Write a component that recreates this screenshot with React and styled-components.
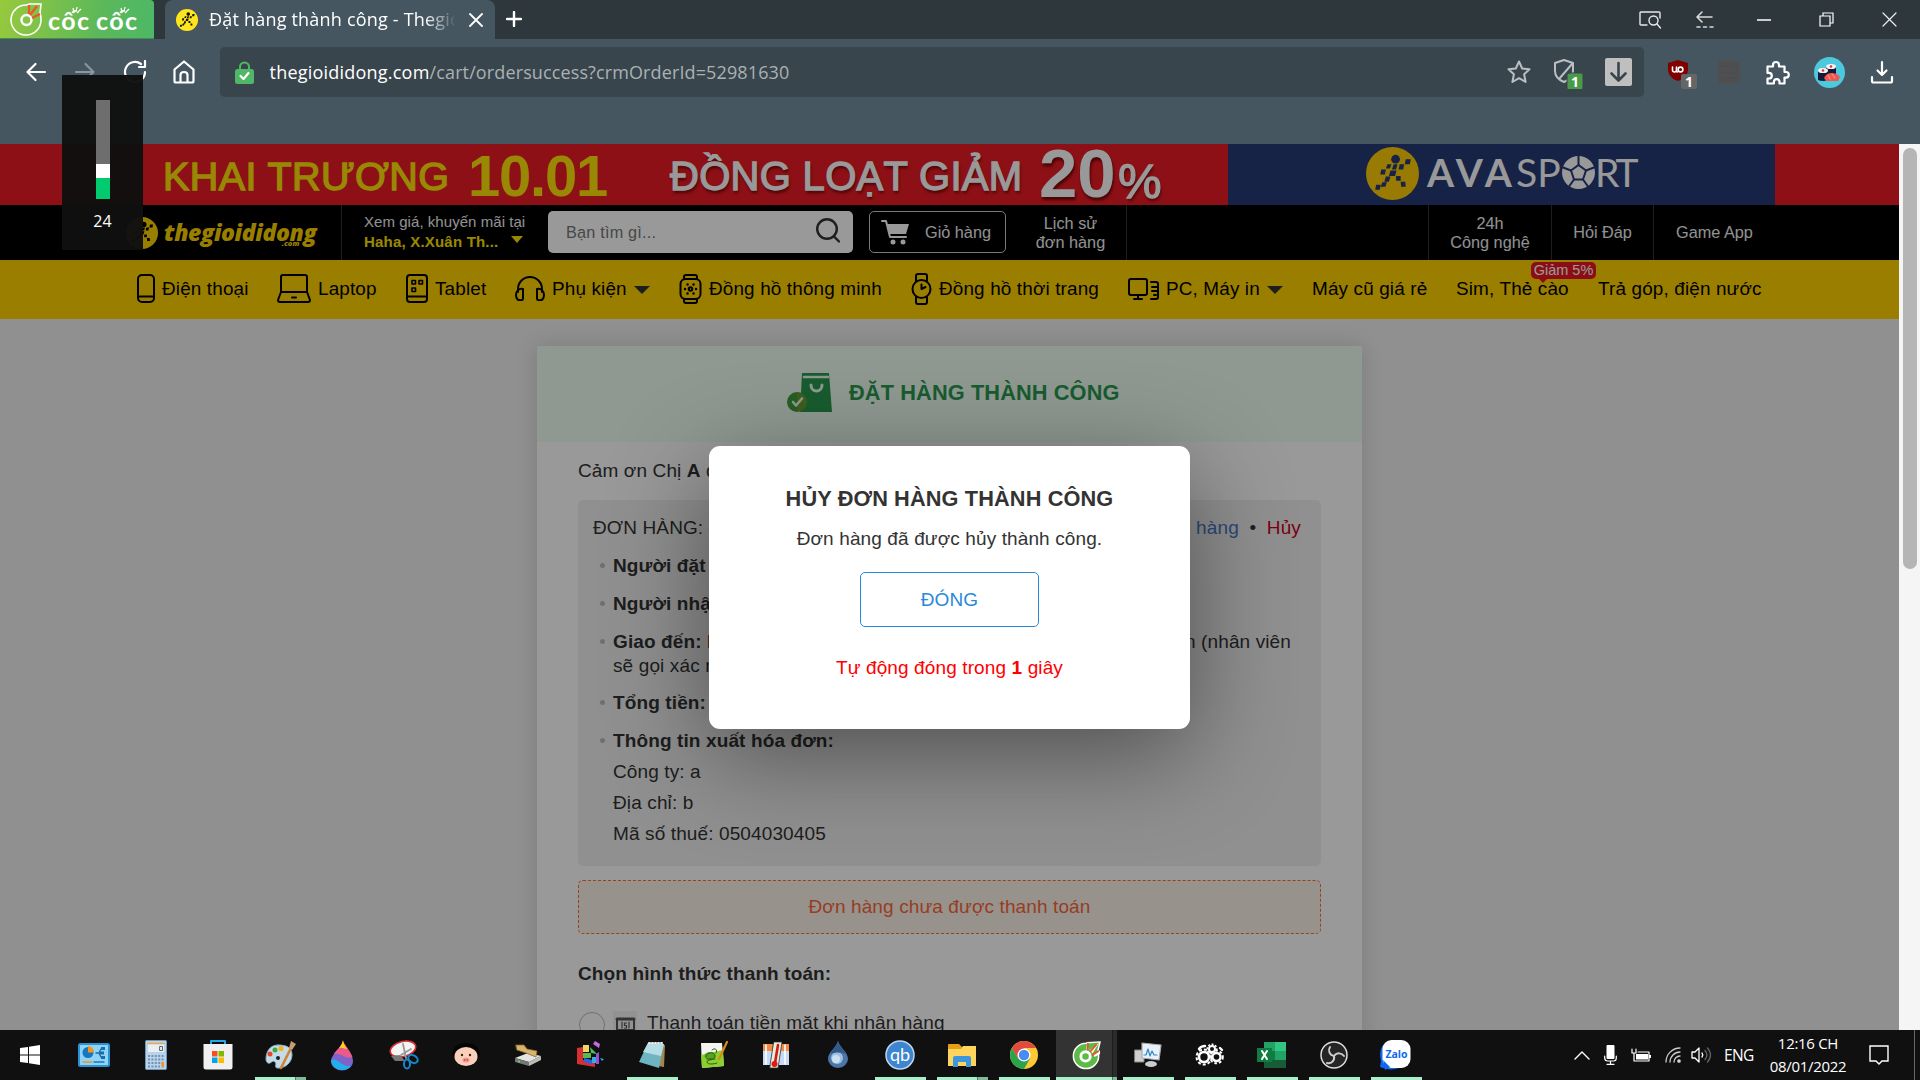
import React from "react";
import styled, { createGlobalStyle } from "styled-components";

const Global = createGlobalStyle`
  * { box-sizing: border-box; }
  body { margin: 0; background: #909090; overflow: hidden; }
  #root { font-family: "Liberation Sans", Arial, sans-serif; }
  svg { display: block; flex-shrink: 0; }
`;

const UI = `"Open Sans", "Noto Sans", sans-serif`;

const Screen = styled.div`
  position: relative;
  width: 1920px;
  height: 1080px;
  overflow: hidden;
  display: flex;
  flex-direction: column;
`;

/* ---------- browser chrome ---------- */
const TabStrip = styled.div`
  height: 39px;
  display: flex;
  background: #2d373c;
`;
const Brand = styled.div`
  width: 154px;
  height: 39px;
  border-top-right-radius: 4px;
  background: linear-gradient(100deg, #97c93d 0%, #5cb85a 65%, #4cb866 100%);
  border-bottom: 1px solid #3f8f50;
`;
const Tab = styled.div`
  width: 330px;
  margin-left: 11px;
  padding-left: 11px;
  display: flex;
  align-items: center;
  background: #455660;
  border-radius: 8px 8px 0 0;
`;
const TabTitle = styled.div`
  width: 245px;
  margin: 0 15px 2px 11px;
  overflow: hidden;
  white-space: nowrap;
  font: 18px/30px ${UI};
  letter-spacing: 0.2px;
  color: #fff;
  mask-image: linear-gradient(90deg, #000 88%, transparent 101%);
`;
const NewTab = styled.div`
  margin: 11px 0 0 11px;
`;
const WindowTools = styled.div`
  margin-left: auto;
  width: 280px;
  display: flex;
  align-items: center;
`;
const Toolbar = styled.div`
  height: 105px;
  display: flex;
  align-items: flex-start;
  background: #455660;
  padding-top: 8px;
`;
const NavButtons = styled.div`
  width: 220px;
  height: 50px;
  padding-left: 24px;
  display: flex;
  align-items: center;
  gap: 25.4px;
`;
const Address = styled.div`
  width: 1424px;
  height: 50px;
  padding: 0 12px 0 15px;
  display: flex;
  align-items: center;
  background: #39454c;
  border-radius: 5px;
`;
const Url = styled.div`
  flex: 1;
  margin: 0 0 1px 15.500px;
  font: 18px/30px ${UI};
  letter-spacing: 0.12px;
  color: #aab1b5;
  white-space: nowrap;
`;
const Host = styled.span`
  color: #fff;
  letter-spacing: 0.22px;
`;
const AddressIcons = styled.div`
  display: flex;
  align-items: center;
  gap: 19px;
`;
const Extensions = styled.div`
  height: 50px;
  padding-left: 19px;
  display: flex;
  align-items: center;
`;
const Slot = styled.div`
  width: ${(p) => p.$w}px;
  display: flex;
  justify-content: center;
  flex-shrink: 0;
`;

/* ---------- page ---------- */
const Viewport = styled.div`
  height: 886px;
  display: flex;
  overflow: hidden;
`;
const Page = styled.div`
  position: relative;
  width: 1899px;
  height: 886px;
  overflow: hidden;
  background: #f0f0f0;
`;
const Scrollbar = styled.div`
  width: 21px;
  background: #f5f5f5;
  padding: 4px 3px 0 4px;
`;
const Thumb = styled.div`
  height: 421px;
  border-radius: 7px;
  background: #b5b5b5;
`;
const Banner = styled.div`
  height: 61px;
  display: flex;
  background: #e91c25;
  overflow: hidden;
`;
const Promo = styled.div`
  width: 1228px;
  padding-left: 163px;
  display: flex;
`;
const PromoText = styled.span`
  width: ${(p) => p.$w}px;
  flex-shrink: 0;
  white-space: nowrap;
  font-size: ${(p) => p.$size}px;
  line-height: ${(p) => p.$lh}px;
  font-weight: ${(p) => (p.$bold ? 700 : 400)};
  letter-spacing: ${(p) => p.$ls || 0}px;
  color: ${(p) => (p.$white ? "#fff" : "#ffe30a")};
  -webkit-text-stroke: ${(p) => (p.$bold ? 0 : 1.3)}px currentColor;
  text-shadow: ${(p) => (p.$white ? "1px 3px 3px rgba(90,0,0,.8)" : "none")};
`;
const Sport = styled.div`
  width: 547px;
  background: #263a75;
  padding: 3px 0 0 138px;
  display: flex;
`;
const SportName = styled.span`
  width: ${(p) => p.$w}px;
  margin-left: ${(p) => p.$ml || 0}px;
  font: ${(p) => p.$weight} 39px/50px Lato, sans-serif;
  letter-spacing: ${(p) => p.$ls}px;
  color: #fff;
  white-space: nowrap;
`;
const Header = styled.div`
  height: 55px;
  display: flex;
  background: #000;
  color: #f2f2f2;
`;
const LogoCell = styled.div`
  width: 342px;
  padding-left: 126px;
  display: flex;
  align-items: center;
  border-right: 1px solid #333;
`;
const Wordmark = styled.div`
  margin: 0 0 1px 6px;
  color: #ffd400;
  font: italic 800 23px/24px "Open Sans", sans-serif;
  letter-spacing: -0.35px;
`;
const DotCom = styled.div`
  height: 4px;
  margin: -3px 17px -1px 0;
  text-align: right;
  font-size: 7.5px;
  line-height: 4px;
  letter-spacing: 0;
`;
const Location = styled.div`
  width: 184px;
  margin-left: 22px;
  padding-top: 7px;
  font-size: 15px;
  line-height: 19.5px;
  letter-spacing: 0.05px;
  white-space: nowrap;
`;
const LocationRow = styled.div`
  display: flex;
  align-items: center;
  gap: 6px;
  font-weight: 700;
  color: #ffe400;
  letter-spacing: 0.2px;
`;
const Search = styled.div`
  width: 305px;
  height: 42px;
  margin-top: 6px;
  padding: 0 13px 0 18px;
  display: flex;
  align-items: center;
  justify-content: space-between;
  border-radius: 5px;
  background: #fff;
  color: #777;
  font-size: 16.25px;
  letter-spacing: 0.2px;
  svg { margin-bottom: 3px; }
`;
const Cart = styled.div`
  width: 137px;
  height: 42px;
  margin: 6px 0 0 16px;
  padding-left: 11px;
  display: flex;
  align-items: center;
  gap: 15px;
  border: 1px solid #ccc;
  border-radius: 5px;
  font-size: 16.25px;
`;
const HeadLink = styled.div`
  width: ${(p) => p.$w}px;
  margin-left: ${(p) => p.$ml || 0}px;
  padding-left: ${(p) => p.$pl || 0}px;
  display: flex;
  align-items: center;
  justify-content: center;
  text-align: center;
  font-size: 16.25px;
  line-height: 19px;
  border-left: ${(p) => (p.$left ? "1px solid #333" : "none")};
  border-right: ${(p) => (p.$right ? "1px solid #333" : "none")};
`;
const Nav = styled.div`
  height: 59px;
  padding: 0 0 2px 137px;
  display: flex;
  background: #ffd200;
`;
const NavItem = styled.div`
  position: relative;
  width: ${(p) => p.$w}px;
  display: flex;
  align-items: center;
  flex-shrink: 0;
  color: #000;
  font-size: 18.9px;
  letter-spacing: 0.15px;
  white-space: nowrap;
`;
const NavIcon = styled.div`
  width: ${(p) => p.$w}px;
  flex-shrink: 0;
`;
const Caret = styled.i`
  margin: 3px 0 0 7px;
  border: 8px solid transparent;
  border-top-color: #333;
  border-width: 8px 8px 0;
`;
const PlaceCaret = styled(Caret)`
  margin-top: -4px;
  border-top-color: #ffe400;
  border-width: 7px 6.5px 0;
`;
const Badge = styled.div`
  position: absolute;
  left: 75px;
  top: 2px;
  width: 65px;
  height: 17px;
  border-radius: 5px;
  background: #e91720;
  color: #fff;
  font-size: 14.5px;
  line-height: 17px;
  letter-spacing: 0;
  text-align: center;
  &::after {
    content: "";
    position: absolute;
    left: 7px;
    top: 16px;
    border: 5px solid transparent;
    border-top-color: #e91720;
    border-bottom: 0;
  }
`;
const Card = styled.div`
  width: 825px;
  height: 800px;
  margin: 27px 0 0 537px;
  background: #fff;
  color: #333;
  font-size: 19px;
  line-height: 24px;
  letter-spacing: 0.12px;
  box-shadow: 0 0 22px rgba(0, 0, 0, 0.14);
`;
const CardHead = styled.div`
  height: 96px;
  padding: 0 0 2px 250px;
  display: flex;
  align-items: center;
  gap: 16px;
  background: #effff3;
  color: #29994f;
  font-size: 21.75px;
  font-weight: 700;
`;
const CardBody = styled.div`
  padding: 17px 41px 0;
`;
const Thanks = styled.div`
  height: 41px;
`;
const Order = styled.div`
  height: 366px;
  padding: 16px 20px 0 15px;
  border-radius: 5px;
  background: #f1f1f1;
  white-space: nowrap;
`;
const OrderHead = styled.div`
  display: flex;
  justify-content: space-between;
  margin-bottom: 14px;
`;
const Actions = styled.div`
  display: flex;
`;
const Blue = styled.span`
  color: #4a78c8;
`;
const Dot = styled.span`
  width: 28px;
  text-align: center;
`;
const Red = styled.span`
  color: ${(p) => p.$c || "#d0021b"};
`;
const Line = styled.div`
  position: relative;
  padding: 0 10px 0 20px;
  margin-bottom: ${(p) => (p.$mb === undefined ? 14 : p.$mb)}px;
  display: flex;
  justify-content: space-between;
  &::before {
    content: "";
    display: ${(p) => (p.$dot ? "block" : "none")};
    position: absolute;
    left: 7px;
    top: 9px;
    width: 5px;
    height: 5px;
    border-radius: 50%;
    background: #bbb;
  }
`;
const Unpaid = styled.div`
  height: 54px;
  margin-top: 14px;
  border: 1px dashed #fb6e2e;
  border-radius: 5px;
  background: #fef4ec;
  color: #f9683a;
  text-align: center;
  line-height: 52px;
`;
const PayTitle = styled.div`
  margin-top: 28px;
  font-weight: 700;
`;
const PayOption = styled.div`
  margin-top: 25px;
  display: flex;
  align-items: flex-start;
`;
const Radio = styled.i`
  width: 26px;
  height: 26px;
  margin: 1px 8px 0 1px;
  border: 1.5px solid #bbb;
  border-radius: 50%;
`;
const PayIcon = styled.div`
  width: 24px;
  height: 26px;
  margin-right: 10px;
  background: #f4f4f4;
`;
const Overlay = styled.div`
  position: absolute;
  inset: 0;
  background: rgba(0, 0, 0, 0.4);
`;
const Modal = styled.div`
  position: absolute;
  left: 709px;
  top: 302px;
  width: 481px;
  height: 283px;
  padding-top: 41px;
  display: flex;
  flex-direction: column;
  align-items: center;
  border-radius: 11px;
  background: #fff;
  box-shadow: 0 25px 100px rgba(0, 0, 0, 0.45);
  color: #333;
  font-size: 19px;
  line-height: 24px;
  letter-spacing: 0.12px;
`;
const ModalTitle = styled.div`
  height: 40px;
  font-size: 21.75px;
  font-weight: 700;
`;
const Close = styled.button`
  width: 179px;
  height: 55px;
  margin: 21px 0 29px;
  padding: 1px 0 0;
  border: 1px solid #288ad6;
  border-radius: 5px;
  background: #fff;
  color: #288ad6;
  font: 19px "Liberation Sans", sans-serif;
  letter-spacing: 0.15px;
`;

/* ---------- volume flyout ---------- */
const Flyout = styled.div`
  position: absolute;
  left: 62px;
  top: 75px;
  width: 81px;
  height: 175px;
  padding-top: 25px;
  display: flex;
  flex-direction: column;
  align-items: center;
  background: rgba(16, 16, 16, 0.97);
  color: #fff;
  font: 16px/20px ${UI};
`;
const Meter = styled.div`
  width: 14px;
  height: 99px;
  margin-bottom: 12px;
  background: linear-gradient(#6e6e6e 64px, #fff 64px 78px, #00cb6e 78px);
`;

/* ---------- taskbar ---------- */
const Taskbar = styled.div`
  position: relative;
  height: 50px;
  display: flex;
  background: #101010;
`;
const Start = styled.div`
  width: 63px;
  display: flex;
  align-items: center;
  padding-left: 20px;
`;
const TaskButton = styled.div`
  position: relative;
  width: 62px;
  height: 50px;
  padding-right: 1px;
  display: flex;
  align-items: center;
  justify-content: center;
  background: ${(p) => (p.$mode === "active" ? "linear-gradient(90deg,#101010 1px,#333 1px 57px,#1c1c1c 57px 58px,#2b2b2b 58px)" : "none")};
  &::after {
    content: "";
    position: absolute;
    bottom: 0;
    left: ${(p) => (p.$mode === "active" ? 1 : 6)}px;
    width: ${(p) => (p.$mode === "active" ? 61 : 51)}px;
    height: 3px;
    background: ${(p) =>
      !p.$mode ? "none"
        : p.$mode === "multi" ? "linear-gradient(90deg,#a6f0ca 40px,#4f7a64 40px 41px,#7fbb9b 41px)"
        : p.$mode === "active" ? "linear-gradient(90deg,#a6f0ca 56px,#4f7a64 56px 57px,#7fbb9b 57px)"
        : "#a6f0ca"};
  }
`;
const Tray = styled.div`
  margin-left: auto;
  display: flex;
  align-items: center;
  color: #fff;
  font: 15.5px/23px ${UI};
`;
const Lang = styled.div`
  width: 55px;
  padding-left: 10px;
  letter-spacing: -0.6px;
`;
const Clock = styled.div`
  width: 80px;
  margin: 0 21px 1px -1px;
  text-align: center;
  font-size: 15px;
  letter-spacing: -0.3px;
  white-space: nowrap;
`;
const ShowDesktop = styled.div`
  width: 6px;
  height: 50px;
  margin-left: 25px;
  border-left: 1px solid #666;
`;

const Ico = ({ w, h, vb, s = "none", sw = 2, f = "none", children }) => (
  <svg width={w} height={h} viewBox={vb || `0 0 ${w} ${h}`} fill={f} stroke={s} strokeWidth={sw} strokeLinecap="round" strokeLinejoin="round">
    {children}
  </svg>
);

const Runner = ({ size, bg, ink }) => (
  <Ico w={size} h={size} vb="0 0 52 52">
    <circle cx="26" cy="26" r="26" fill={bg} />
    <g fill={ink}>
      <circle cx="29" cy="12" r="4.3" />
      <path d="M38 13h5l-1 5h-5zM32 18h4.500l-1 5h-4.500zM26 18h4l-1.500 5h-4zM20 18h4l-1.500 4h-4zM14 23h4.500l-1 5h-4.500zM23 24h6l-1.500 5.500h-6zM18.500 30h4.500l-1.500 5h-4.500zM28.500 29.500h4.500l0 4.500h-4.500zM15 35.500h4.500l-1.500 4.500h-4.500zM33 35h4.500l.5 5h-4.500zM9 38h4.500l-1 5h-4.500z" transform="translate(1 -1)" />
    </g>
  </Ico>
);

const CocMark = ({ size, fill, ring }) => (
  <Ico w={size} h={size} vb="0 0 32 32">
    <path d="M16 3.500A13.500 13.500 0 1 0 29.500 17c0-2-.2-3.500-1-5L31 2 17 3z" fill={fill} stroke="#fff" strokeWidth={ring} />
    <circle cx="15.500" cy="17.500" r="5" stroke="#fff" strokeWidth="3" fill="none" />
    <path d="m17 3-.5 7 3 .5zM30 3l-10 8 3 3zM31 11l-7 4 1 3 6-3z" fill="#fff" />
    <path d="m18 4 0 6M27 5l-6 7M29 12l-6 4" stroke="#f0532d" strokeWidth="2" />
  </Ico>
);

const BrandLogo = () => (
  <svg width="154" height="38" viewBox="0 0 154 38">
    <g transform="translate(10 2)" fill="none" stroke="#fff">
      <path d="M17 3A15 15 0 1 0 31 18c0-3 0-5-1-7l1-9-12 0z" strokeWidth="1.600" />
      <circle cx="16.500" cy="18" r="5" strokeWidth="2.400" />
      <path d="m19 3 0 9M27 4l-7 9M30 12l-8 4" stroke="#f0532d" strokeWidth="2.200" />
    </g>
    <g fill="#fff" fontFamily="Lato, sans-serif" fontWeight="700" fontSize="25">
      <text x="48" y="30" textLength="41">cốc</text>
      <text x="96" y="30" textLength="41">cốc</text>
    </g>
    <path d="m73 8 1 4m3-5-1 5m5-3-4 4M121 8l1 4m3-5-1 5m5-3-4 4" stroke="#fff" strokeWidth="1.200" />
  </svg>
);

const taskIcons = [
  [<Ico w={32} h={24}><rect x="1" y="1" width="30" height="22" rx="1.500" fill="#8fd3f6" stroke="#2a93d4" /><circle cx="10" cy="9.500" r="5.500" fill="#1a76bf" /><path d="M10 9.500V3a6.500 6.500 0 0 1 6 6.500z" fill="#f6921e" /><path d="M18 10h3l2-4M21 10l2 4" stroke="#1a6cb0" strokeWidth="1.400" /><path d="M23 4h4v3h-4zM22 8.500h4v3h-4zM23 13h4v3h-4z" fill="#1a6cb0" /><path d="M5 19h9" stroke="#f6921e" strokeWidth="1.300" /><path d="M16 19h10" stroke="#1a76bf" strokeWidth="1.300" /></Ico>],
  [<Ico w={22} h={30}><rect x=".5" y=".5" width="21" height="29" rx="1" fill="#b9d3e8" stroke="#6f98b8" strokeWidth="1" /><rect x="3" y="3" width="16" height="9" fill="#e9eef0" /><path d="M3 3.500h16" stroke="#f0a348" strokeWidth="1.500" /><rect x="15" y="6.500" width="2.500" height="4" stroke="#345" strokeWidth=".8" /><path d="M3 16h16M3 19.500h16M3 23h16M3 26.500h12" stroke="#6f93b4" strokeWidth="2.200" strokeDasharray="2 1.400" strokeLinecap="butt" /><rect x="16.500" y="22" width="2.500" height="5.500" fill="#f09030" /></Ico>],
  [<Ico w={30} h={30}><path d="M8 5V1h14v4" stroke="#27a8e6" strokeWidth="2" /><path d="M.5 4h29v23a2.500 2.500 0 0 1-2.500 2.500H3A2.500 2.500 0 0 1 .5 27z" fill="#f0f0f0" /><path d="M9 11h5.500v5.500H9z" fill="#f25022" /><path d="M15.500 11H21v5.500h-5.500z" fill="#7fba00" /><path d="M9 17.500h5.500V23H9z" fill="#00a4ef" /><path d="M15.500 17.500H21V23h-5.500z" fill="#ffb900" /></Ico>],
  [<Ico w={32} h={30}><path d="M14 5C5 5 2 13 2 19c0 3 2 5 4 4s3-3 5-1-1 5 2 6c7 1 15-5 15-13S22 5 14 5z" fill="#c3dcea" stroke="#87aec6" strokeWidth="1" /><circle cx="6" cy="14" r="2.500" fill="#e8452c" /><circle cx="11" cy="10" r="2.500" fill="#3faa3c" /><circle cx="17" cy="8.500" r="2.600" fill="#f6b317" /><circle cx="14" cy="18" r="2" fill="#222" /><path d="M17 28 27 8" stroke="#d58130" strokeWidth="2.600" /><path d="m25 8 2-7 5 3-4 6z" fill="#c4a070" /></Ico>, "multi"],
  [<Ico w={24} h={31}><path d="M13 1c-1 7-12 13-12 20a11 9.500 0 0 0 22 0C23 13 15 9 13 1z" fill="#7e63c9" /><path d="M13 1c1 3 7 9 9.500 16-8 3-10-5-19-3C7 10 12 5 13 1z" fill="#ea5b8a" /><path d="M13 0c-1 4-2 6-4 8 4-1 6 1 8 1-2-3-4-6-4-9z" fill="#ffd21d" /><path d="M1 20c7-3 9 7 20 6-4 6-19 6-20-6z" fill="#1fb1ee" /></Ico>],
  [<Ico w={30} h={30}><ellipse cx="14" cy="9" rx="13" ry="7.500" fill="#f4f4f4" stroke="#d72d35" strokeWidth="1.600" transform="rotate(-14 14 9)" /><path d="m2 16 9-1 5 6-10 0z" fill="#777" /><path d="m14 4 3 14M22 9l-10 6" stroke="#999" strokeWidth="1.800" /><ellipse cx="18" cy="24" rx="3" ry="4.500" stroke="#1687d0" strokeWidth="2" /><ellipse cx="24" cy="19" rx="5" ry="3.500" stroke="#1687d0" strokeWidth="2" transform="rotate(30 24 19)" /></Ico>],
  [<Ico w={30} h={24}><path d="M2 14C-1 5 7 0 15 0s16 5 13 14z" fill="#050505" /><ellipse cx="15" cy="13.500" rx="11.500" ry="9.500" fill="#fbd0bb" /><circle cx="11" cy="12" r="1.200" fill="#321" /><circle cx="19" cy="12" r="1.200" fill="#321" /><ellipse cx="15" cy="17" rx="3.600" ry="2.600" fill="#f29a94" /><circle cx="13.700" cy="17" r=".8" fill="#b33" /><circle cx="16.300" cy="17" r=".8" fill="#b33" /></Ico>],
  [<Ico w={30} h={24}><path d="m2 15 13-5 13 3-12 6z" fill="#e4e4e4" /><path d="m2 15 14 4v4L2 19z" fill="#777" /><path d="m16 19 12-6v4l-12 6z" fill="#bbb" /><circle cx="6" cy="18.500" r="1" fill="#4f4" /><path d="m3 2 8 0 3 4 10 2-1 6-10-4-9-3z" fill="#d8b36c" stroke="#8c6a2c" strokeWidth=".8" /></Ico>],
  [<Ico w={30} h={28}><path d="M2 7l6-1v13l12 3v4L2 23z" fill="#d62f2f" /><path d="M8 4h6v7H8z" fill="#f3d469" /><path d="m15 6 7 7-6-1z" fill="#45c35b" /><path d="m18 3 6 4 1-4-5-3z" fill="#c36be0" /><path d="M8 12h8v5H8z" fill="#5dbb45" /><path d="m9 17 8 2v4l-8-2z" fill="#2465e8" /><path d="M17 16h6v6h-6z" fill="#36a9ea" /><path d="m21 13 3-2v12h-3" fill="#9351d6" /><path d="m25 17 4 1-2 2z" fill="#28a8e8" /></Ico>],
  [<Ico w={28} h={28}><path d="m10 3 17 1-1 22-6-1z" fill="#a5854e" /><path d="m10 2 16 1-5 24L1 21z" fill="#6fb4c2" /><path d="m10 2 16 1-3 12L5 11z" fill="#b5dde3" /><path d="M11 2h15" stroke="#eee" strokeWidth="2" strokeDasharray="1 2" /></Ico>, "run"],
  [<Ico w={28} h={28}><path d="m1 2 21 0 2 23-22 2z" fill="#f5f5f0" /><path d="m1 14 22-5 1 16-22 2z" fill="#8bd02c" /><ellipse cx="10" cy="15" rx="5.500" ry="4" fill="#55a522" /><path d="M6 16c0-5 9-6 9-1s-8 3-8 6 8 2 10 1M7 18h8M12 9c3-3 6 0 4 3" stroke="#315c18" strokeWidth="1" /><path d="m19 18 8-17" stroke="#d88a1a" strokeWidth="2.200" /></Ico>],
  [<Ico w={26} h={28}><rect x="0" y="3" width="26" height="21" fill="#c5daf8" /><path d="M0 3h26v7H0z" fill="#f08a45" /><path d="M3 4v19M22 4v19" stroke="#fff" strokeWidth="1.600" /><path d="m11 1 8 0-4 26-8 0z" fill="#e8f0d8" stroke="#333" strokeWidth=".8" /><path d="m15 4-3 18" stroke="#d31919" strokeWidth="2.600" /><circle cx="11.500" cy="23" r="3" fill="#e01818" /></Ico>],
  [<Ico w={22} h={28}><path d="M11 0C9 7 1 11 1 18a10 9 0 0 0 20 0C21 11 13 7 11 0z" fill="#4d75a8" /><circle cx="10" cy="17" r="6" fill="#9dc0e2" /><circle cx="9" cy="18" r="4" fill="#cbe0f2" /><path d="M11 0C9 7 5 9 3 13c5-2 12-2 16 0-2-4-7-7-8-13z" fill="#33588c" /></Ico>],
  [<Ico w={30} h={30}><circle cx="15" cy="15" r="14" fill="#3d85cf" stroke="#bcd6ef" strokeWidth="1.500" /><text x="15" y="20.500" textAnchor="middle" fontFamily="Lato" fontSize="18" fill="#fff">qb</text></Ico>, "run"],
  [<Ico w={28} h={24}><path d="M0 2a1 1 0 0 1 1-1h10l3 3h13v19H0z" fill="#e5a014" /><path d="M0 6h13l2-3h13v20H0z" fill="#ffd45e" /><path d="M5 24V15q0-2 2-2h14q2 0 2 2v9h-5v-5h-8v5z" fill="#3b96dd" /></Ico>, "multi"],
  [<Ico w={28} h={28}><circle cx="14" cy="14" r="14" fill="#fcc934" /><path d="M1.900 7A14 14 0 0 1 26.100 7H14L8 17.500z" fill="#e04a3f" /><path d="M1.900 7A14 14 0 0 0 14 28l6-10.500H8z" fill="#2ba24c" /><circle cx="14" cy="14" r="6.500" fill="#fff" /><circle cx="14" cy="14" r="5.200" fill="#4a8af4" /></Ico>, "run"],
  [<CocMark size={30} fill="#5cbb46" ring={1.6} />, "active"],
  [<Ico w={28} h={26}><path d="M1 8h9v12H1z" fill="#cfcfcf" stroke="#888" strokeWidth="1" /><path d="m8 1 19 2-2 15-17-2z" fill="#e9f2fa" stroke="#aaa" strokeWidth="1.200" /><path d="M10 13h2l2-6 2 7 2-5 2 4h3" stroke="#3486c4" strokeWidth="1.200" /><ellipse cx="17" cy="22" rx="6" ry="3" fill="#ccc" /></Ico>, "run"],
  [<Ico w={30} h={24}><g fill="none" stroke="#fff"><circle cx="9" cy="14" r="5" strokeWidth="2.600" /><circle cx="9" cy="14" r="7.500" strokeWidth="2" strokeDasharray="3 2" strokeLinecap="butt" /><circle cx="21.500" cy="14" r="4" strokeWidth="2.400" /><circle cx="21.500" cy="14" r="6.300" strokeWidth="2" strokeDasharray="2.600 2" strokeLinecap="butt" /><circle cx="17" cy="6" r="3" strokeWidth="2" /><circle cx="17" cy="6" r="4.800" strokeWidth="1.500" strokeDasharray="2 1.600" strokeLinecap="butt" /><path d="M4 6q2-3 6-3M25 5l2 2" strokeWidth="2.400" /></g></Ico>, "run"],
  [<Ico w={30} h={28}><path d="M7 1h22v26H7z" fill="#21a366" /><path d="M18 1h11v9H18z" fill="#33c481" /><path d="M7 10h11v9H7z" fill="#107c41" /><path d="M7 19h22v8H7z" fill="#185c37" /><path d="M0 7h15v14H0z" fill="#107c41" /><path d="m5 10 5 8m0-8-5 8" stroke="#fff" strokeWidth="2" /></Ico>, "run"],
  [<Ico w={28} h={28}><circle cx="14" cy="14" r="13" fill="#252525" stroke="#ddd" strokeWidth="1.500" /><path d="M14 15c-5-1-6-6-4-9M14 15c3-4 8-3 10 0M14 15c1 5-3 8-7 7" stroke="#ccc" strokeWidth="2" /></Ico>, "run"],
  [<Ico w={31} h={30}><path d="M4 4C-1 9 0 17 1 21l-1 6c7 3 14 3 19 1z" fill="#0d68f2" /><rect x="2.500" y="0" width="28" height="28" rx="9" fill="#fff" /><path d="M3 20l2 10 5-3z" fill="#0d68f2" /><text x="16.500" y="17.500" textAnchor="middle" fontFamily="Open Sans" fontWeight="700" fontSize="10.500" fill="#0d68f2">Zalo</text></Ico>, "run"],
];

const K = "#000";
const navItems = [
  [140, 25, "Điện thoại", <Ico w={18} h={29} s={K}><rect x="1" y="1" width="16" height="27" rx="4" /><path d="M1 22.500h16" /></Ico>],
  [129, 41, "Laptop", <Ico w={34} h={29} s={K}><path d="M4 18V3q0-2 2-2h22q2 0 2 2v15M4 18h26l3 8q0 2-2 2H3q-2 0-2-2zM15 23.500h4" /></Ico>],
  [109, 29, "Tablet", <Ico w={22} h={29} s={K}><rect x="1" y="1" width="20" height="27" rx="3" /><path d="M1 22.500h20" /><path d="M6 6.500h3.500v3.500H6zM13 6.500h3.500v3.500H13zM6 14h3.500v3.500H6z" strokeWidth="1.600" /></Ico>],
  [164, 37, "Phụ kiện", <Ico w={30} h={25} s={K}><path d="M3 16v-3a12 12 0 0 1 24 0v3" /><path d="M8 13c-4-1-7 2-7 6s2 6 6 5q1 0 1-2zM22 13c4-1 7 2 7 6s-2 6-6 5q-1 0-1-2z" /></Ico>, true],
  [232, 30, "Đồng hồ thông minh", <Ico w={23} h={30} s={K}><rect x="1.500" y="5" width="20" height="20" rx="5" /><path d="M5 5V3q0-2 2-2h9q2 0 2 2v2M5 25v2q0 2 2 2h9q2 0 2-2v-2" /><circle cx="11.500" cy="15" r="1.800" /><path d="M8.500 10.500h.1M14.500 10.500h.1M6 15h.1M17 15h.1M8.500 19.500h.1M14.500 19.500h.1" strokeWidth="2.400" /></Ico>],
  [217, 28, "Đồng hồ thời trang", <Ico w={21} h={32} s={K}><circle cx="10.500" cy="16" r="9" /><path d="M5 8V3q0-2 2-2h7q2 0 2 2v5M5 24v5q0 2 2 2h7q2 0 2-2v-5M10.500 11.500V16l4-2" /></Ico>],
  [184, 38, "PC, Máy in", <Ico w={31} h={22} s={K}><rect x="1" y="1" width="18" height="16" rx="2" /><path d="M10 17v4M6 21h8" /><path d="M23 4h5q2 0 2 2v13q0 2-2 2h-5M24 9h5M24 13h5M26 17h2" /></Ico>, true],
  [144, 0, "Máy cũ giá rẻ"],
  [142, 0, "Sim, Thẻ cào", null, false, "Giảm 5%"],
  [170, 0, "Trả góp, điện nước"],
];

const W = "#fff";
const G = "#b9bfc2";

export default function App() {
  return (
    <Screen>
      <Global />
      <TabStrip>
        <Brand><BrandLogo /></Brand>
        <Tab>
          <Runner size={22} bg="#ffe61c" ink="#111" />
          <TabTitle>Đặt hàng thành công - Thegioididong</TabTitle>
          <Ico w={14} h={14} s={W} sw={1.8}><path d="m1 1 12 12M13 1 1 13" /></Ico>
        </Tab>
        <NewTab><Ico w={16} h={16} s={W} sw={2.4}><path d="M8 1v14M1 8h14" /></Ico></NewTab>
        <WindowTools>
          <Slot $w={20}><Ico w={23} h={18} s="#e8e8e8" sw={1.4}><path d="M8 14H2q-1 0-1-1V2q0-1 1-1h18q1 0 1 1v5" /><circle cx="14.500" cy="9.500" r="4.500" /><path d="m18 13 3.500 4" /></Ico></Slot>
          <Slot $w={89}><Ico w={19} h={17} s="#d8d8d8" sw={1.6}><path d="M17 6H2M7 1 2 6l5 5" /><path d="M2 16h16" strokeDasharray="3 3.500" /></Ico></Slot>
          <Slot $w={30}><Ico w={14} h={2} s={W} sw={1.4}><path d="M0 1h14" /></Ico></Slot>
          <Slot $w={94}><Ico w={15} h={15} s={W} sw={1.2}><path d="M1 4h10v10H1zM4 4V1h10v10h-3" strokeLinejoin="miter" /></Ico></Slot>
          <Slot $w={33}><Ico w={15} h={15} s="#eee" sw={1.2}><path d="m1 1 13 13M14 1 1 14" /></Ico></Slot>
        </WindowTools>
      </TabStrip>

      <Toolbar>
        <NavButtons>
          <Ico w={24} h={24} s={W} sw={2.2}><path d="M21 12H4M11.500 4 3.500 12l8 8" /></Ico>
          <Ico w={24} h={24} s="#8b979d" sw={2.2}><path d="M3 12h17M12.500 4l8 8-8 8" /></Ico>
          <Ico w={24} h={24} s={W} sw={2.2}><path d="M22 12a10 10 0 1 1-4-8M22 1v6h-6" /></Ico>
          <Ico w={24} h={24} s={W} sw={2.2}><path d="M2.500 9.500 12 1.500l9.500 8V21q0 1.500-1.500 1.500H4q-1.500 0-1.500-1.500z" /><path d="M8.500 22v-7q0-3 3.500-3t3.500 3v7" /></Ico>
        </NavButtons>
        <Address>
          <Ico w={19} h={23}><path d="M5 10V6a4.500 4.500 0 0 1 9 0v4" stroke="#4fb765" strokeWidth="2" /><rect x="0" y="8" width="19" height="15" rx="2.500" fill="#4fb765" /><path d="m5.500 15 3 3 5-6" stroke="#fff" strokeWidth="2.200" /></Ico>
          <Url><Host>thegioididong.com</Host>/cart/ordersuccess?crmOrderId=52981630</Url>
          <AddressIcons>
            <Ico w={24} h={24} s={G} sw={2}><path d="m12 1.500 3.200 7 7.300.8-5.400 5 1.500 7.700-6.600-3.800L5.400 22l1.500-7.700-5.400-5 7.300-.8z" /></Ico>
            <Ico w={36} h={34} s={G} sw={2}><path d="M14 5 5 8v8c0 6 4 9 9 11 5-2 9-5 9-11V8zM22 9 9 24" /><rect x="17" y="18" width="16" height="17" rx="2" fill="#4a9a4b" stroke="#39454c" strokeWidth="1" /><text x="25" y="31.500" fontFamily="Open Sans" fontWeight="700" fontSize="14" fill="#fff" stroke="none" textAnchor="middle">1</text></Ico>
            <Ico w={27} h={28}><rect width="27" height="28" rx="2" fill="#bfbfbf" /><path d="M13.500 5v17M6.500 15.500l7 7 7-7" stroke="#39454c" strokeWidth="2.600" /></Ico>
          </AddressIcons>
        </Address>
        <Extensions>
          <Slot $w={38}><Ico w={32} h={34}><path d="M12 5 2 8v6c0 6 4 10 10 12 6-2 10-6 10-12V8z" fill="#800000" /><path d="M6.500 12v3q0 2 2 2t2-2v-3v3q0 2 1 2" stroke="#fff" strokeWidth="1.600" /><circle cx="14.500" cy="14.500" r="2.400" stroke="#fff" strokeWidth="1.600" /><rect x="15" y="19" width="16" height="15" rx="2" fill="#666" /><text x="23" y="32" fontFamily="Open Sans" fontWeight="700" fontSize="14" fill="#fff" textAnchor="middle">1</text></Ico></Slot>
          <Slot $w={55}><Ico w={22} h={22}><rect width="22" height="22" rx="2" fill="#514f4e" /><path d="M3 5h9M15 3h4v4h-4zM4 12h3M10 12h3M16 12h3M4 17h3M10 17h3M16 17h3" stroke="#454f55" strokeWidth="2" /></Ico></Slot>
          <Slot $w={42}><Ico w={25} h={25} s={W} sw={2.2}><path d="M2.500 6.500H8V5a3 3 0 0 1 6 0v1.500h5.500V12H21a2.800 2.800 0 0 1 0 5.600h-1.500V23.500h-5V22a2.800 2.800 0 0 0-5.600 0v1.500H2.500v-5H4a2.800 2.800 0 0 0 0-5.600H2.500z" /></Ico></Slot>
          <Slot $w={62}><Ico w={31} h={31}><circle cx="15.500" cy="15.500" r="15.500" fill="#4cc9dd" /><path d="M12 9h10v11H12z" fill="#141a38" /><ellipse cx="17" cy="9.500" rx="5" ry="2.600" fill="#f4f4f4" /><circle cx="17" cy="9.500" r="1.300" fill="#d33" /><path d="M4 14h10v9q-5 2-10 0z" fill="#141a38" /><ellipse cx="9" cy="13.500" rx="5" ry="2.600" fill="#f4f4f4" /><circle cx="9" cy="13.500" r="1.300" fill="#d33" /><path d="M10 21c3-7 12-6 16-1l-2 4H12z" fill="#f0574d" /><path d="M14 18l2 4M18 17l3 4" stroke="#ff8b80" strokeWidth="1.200" /></Ico></Slot>
          <Slot $w={44}><Ico w={24} h={24} s={W} sw={2.2}><path d="M12 2v13M7.500 10.500 12 15l4.500-4.500M2 17v4q0 1.500 1.500 1.500h17q1.500 0 1.500-1.500v-4" /></Ico></Slot>
        </Extensions>
      </Toolbar>

      <Viewport>
        <Page>
          <Banner>
            <Promo>
              <PromoText $w={305} $size={39.5} $lh={64} $ls={0.4}>KHAI TRƯƠNG</PromoText>
              <PromoText $w={202} $size={58} $lh={64} $ls={-1.2} $bold>10.01</PromoText>
              <PromoText $w={369} $size={40} $lh={64} $ls={0.3} $white>ĐỒNG LOẠT GIẢM</PromoText>
              <PromoText $w={79} $size={69} $lh={60} $white $bold>20</PromoText>
              <PromoText $w={50} $size={49} $lh={75} $white>%</PromoText>
            </Promo>
            <Sport>
              <Runner size={53} bg="#ffcb05" ink="#263a75" />
              <SportName $w={88} $ml={8} $weight={700} $ls={4}>AVA</SportName>
              <SportName $w={46} $ml={1} $weight={400} $ls={0}>SP</SportName>
              <Slot $w={33}><Ico w={33} h={52}><circle cx="16.500" cy="25.500" r="16.500" fill="#fff" /><path d="m16.500 18 7.500 5.500-3 9h-9l-3-9z" fill="#fff" stroke="#263a75" strokeWidth="2" /><path d="M16.500 18v-9M24 23.500l8-3M21 32.500l5 7M12 32.500l-5 7M9 23.500l-8-3" stroke="#263a75" strokeWidth="2" /></Ico></Slot>
              <SportName $w={50} $ml={0} $weight={400} $ls={-3}>RT</SportName>
            </Sport>
          </Banner>
          <Header>
            <LogoCell>
              <Runner size={32} bg="#ffd400" ink="#000" />
              <Wordmark>thegioididong<DotCom>.com</DotCom></Wordmark>
            </LogoCell>
            <Location>
              Xem giá, khuyến mãi tại
              <LocationRow>Haha, X.Xuân Th...<PlaceCaret /></LocationRow>
            </Location>
            <Search>Bạn tìm gì...<Ico w={24} h={26} s="#333" sw={2.4}><circle cx="11" cy="11" r="9.800" /><path d="m18 18.500 5 5" /></Ico></Search>
            <Cart>
              <Ico w={29} h={26}><path d="M1 2h4l4 16h16" stroke="#fff" strokeWidth="2" /><path d="M6 5h22l-3 10H9z" fill="#fff" /><circle cx="12" cy="23" r="2.500" fill="#fff" /><circle cx="22" cy="23" r="2.500" fill="#fff" /></Ico>
              Giỏ hàng
            </Cart>
            <HeadLink $w={121} $right $pl={9}>Lịch sử<br />đơn hàng</HeadLink>
            <HeadLink $w={124} $ml={301} $left $right>24h<br />Công nghệ</HeadLink>
            <HeadLink $w={102} $right>Hỏi Đáp</HeadLink>
            <HeadLink $w={121}>Game App</HeadLink>
          </Header>
          <Nav>
            {navItems.map(([w, iw, label, icon, caret, badge]) => (
              <NavItem key={label} $w={w}>
                {icon && <NavIcon $w={iw}>{icon}</NavIcon>}
                {label}
                {caret && <Caret />}
                {badge && <Badge>{badge}</Badge>}
              </NavItem>
            ))}
          </Nav>
          <Card>
            <CardHead>
              <Ico w={46} h={40}><path d="M15 0h27l3 39H13z" fill="#29994f" /><path d="M17 4h24" stroke="#e8fff0" strokeWidth="2.600" /><path d="M24 12c0 8 11 8 11 0" stroke="#e8fff0" strokeWidth="3" /><circle cx="10" cy="29" r="10" fill="#3f9f3d" /><path d="M10 19a10 10 0 0 1 0 20z" fill="#7c9c2e" opacity=".7" /><path d="m6 29 3 3.500 6-7" stroke="#e8fff0" strokeWidth="2.600" /></Ico>
              ĐẶT HÀNG THÀNH CÔNG
            </CardHead>
            <CardBody>
              <Thanks>Cảm ơn Chị <b>A</b> đã cho chúng tôi cơ hội được phục vụ.</Thanks>
              <Order>
                <OrderHead>
                  <span>ĐƠN HÀNG: #52981630</span>
                  <Actions><Blue>Quản lý đơn hàng</Blue><Dot>•</Dot><Red>Hủy</Red></Actions>
                </OrderHead>
                <Line $dot><b>Người đặt hàng:</b></Line>
                <Line $dot><b>Người nhận hàng:</b></Line>
                <Line $dot $mb={0}><span><b>Giao đến: <Red $c="#7a2a2a">H</Red></b></span><span>n (nhân viên</span></Line>
                <Line $mb={13}>sẽ gọi xác nhận)</Line>
                <Line $dot><b>Tổng tiền:</b></Line>
                <Line $dot $mb={7}><b>Thông tin xuất hóa đơn:</b></Line>
                <Line $mb={7}>Công ty: a</Line>
                <Line $mb={7}>Địa chỉ: b</Line>
                <Line $mb={7}>Mã số thuế: 0504030405</Line>
              </Order>
              <Unpaid>Đơn hàng chưa được thanh toán</Unpaid>
              <PayTitle>Chọn hình thức thanh toán:</PayTitle>
              <PayOption>
                <Radio />
                <PayIcon><Ico w={24} h={26}><path d="M4 8h17v11H4z" stroke="#555" strokeWidth="2" /><path d="M4 8h17" stroke="#555" strokeWidth="3" /><path d="M9 11v6M16 11v6M13.500 12h-2v2.500h2V17h-2" stroke="#555" strokeWidth="1.200" /></Ico></PayIcon>
                Thanh toán tiền mặt khi nhận hàng
              </PayOption>
            </CardBody>
          </Card>
          <Overlay />
          <Modal>
            <ModalTitle>HỦY ĐƠN HÀNG THÀNH CÔNG</ModalTitle>
            <div>Đơn hàng đã được hủy thành công.</div>
            <Close>ĐÓNG</Close>
            <Red $c="#f00">Tự động đóng trong <b>1</b> giây</Red>
          </Modal>
        </Page>
        <Scrollbar><Thumb /></Scrollbar>
      </Viewport>

      <Taskbar>
        <Start><Ico w={20} h={20}><path d="M0 3 8 2v7.500H0zM9 1.800 20 0v9.500H9zM0 10.500h8V18l-8-1zM9 10.500h11V20L9 18.200z" fill="#fff" /></Ico></Start>
        {taskIcons.map(([icon, mode], i) => <TaskButton key={i} $mode={mode}>{icon}</TaskButton>)}
        <Tray>
          <Slot $w={28}><Ico w={16} h={9} s={W} sw={1.4}><path d="m1 8 7-7 7 7" /></Ico></Slot>
          <Slot $w={29}><Ico w={13} h={20}><rect x="2.500" y="0" width="8" height="14" rx="1" fill="#fff" /><path d="M.7 11v2q0 3 3 3h6q2.600 0 2.600-3v-2M6.500 16v3M3 19.300h7" stroke="#fff" strokeWidth="1.200" /></Ico></Slot>
          <Slot $w={32}><Ico w={20} h={14}><path d="M1 1v4h4V1M3 5v8h15V4H7" stroke="#fff" strokeWidth="1.200" /><path d="M5 6h12v5.500H5zM18 7h2v3h-2z" fill="#fff" /></Ico></Slot>
          <Slot $w={31}><Ico w={16} h={16} s="#ccc" sw={1.3}><path d="M1 15A14 14 0 0 1 15 1M5 15A10 10 0 0 1 15 5M9 15a6 6 0 0 1 6-6" /><circle cx="14" cy="14" r="1.200" fill="#fff" /></Ico></Slot>
          <Slot $w={26}><Ico w={20} h={18} s={W} sw={1.3}><path d="M1 6h3l4-4v14l-4-4H1zM11 7q1.500 2 0 4" /><path d="M14 4.500q4 4.500 0 9M16.500 2q6 7 0 14" stroke="#666" /></Ico></Slot>
          <Lang>ENG</Lang>
          <Clock>12:16 CH<br />08/01/2022</Clock>
          <Ico w={20} h={20} s={W} sw={1.4}><path d="M1 1h18v15h-6l-3 3-3-3H1z" strokeLinejoin="miter" /></Ico>
          <ShowDesktop />
        </Tray>
      </Taskbar>

      <Flyout><Meter />24</Flyout>
    </Screen>
  );
}
